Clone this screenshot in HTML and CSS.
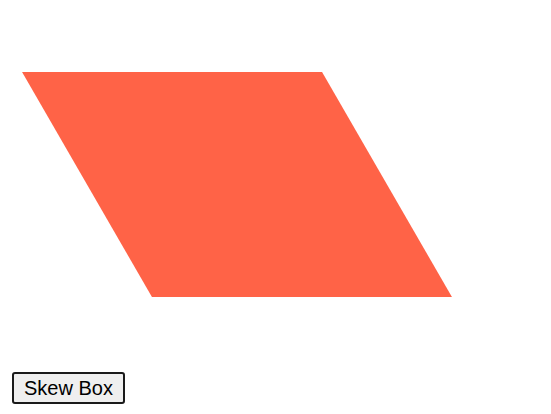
FILE: index.html
```html
<!DOCTYPE html>
<html>
<head>
<meta charset="utf-8">
<link rel="stylesheet" href="styles.css">
</head>
<body>
<div class="stage">
  <div class="box"></div>
</div>
<div class="controls">
  <button class="skew-btn">Skew Box</button>
</div>
</body>
</html>
```
FILE: styles.css
```css
html, body {
  margin: 0;
  padding: 0;
  background: #ffffff;
}
.stage {
  padding: 72px 0 0 87px;
}
.box {
  width: 300px;
  height: 225px;
  background: #ff6347;
  transform: skewX(30deg);
}
.controls {
  padding: 75px 0 0 12px;
}
.skew-btn {
  font-family: "Liberation Sans", Arial, sans-serif;
  font-size: 20px;
  line-height: 23px;
  height: 32px;
  width: 113px;
  padding: 0;
  margin: 0;
  border: 2px solid #1a1a1a;
  border-radius: 3px;
  background: #efefef;
  color: #000;
  box-sizing: border-box;
}
```
